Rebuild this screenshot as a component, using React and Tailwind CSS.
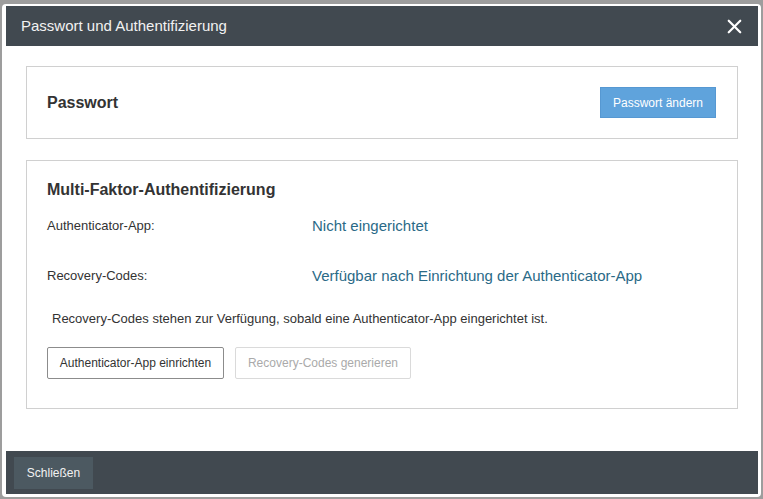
import React from "react";
import { X } from "lucide-react";

const font = { fontFamily: '"Liberation Sans", Arial, sans-serif' };

export default function App() {
  return (
    <div className="w-[763px] h-[499px] bg-[#9d9d9d] overflow-hidden" style={font}>
      <div className="mt-[4px] ml-[2px] w-[759px] h-[493px] bg-white rounded-[4px] pl-[4px] pr-[3px] pt-[2px] pb-[3px] flex flex-col">
        {/* header */}
        <div className="h-[40px] bg-[#414950] flex items-center justify-between pl-[15px] pr-[12px] shrink-0">
          <h1 className="text-[15px] text-[#f2f2f2]">Passwort und Authentifizierung</h1>
          <X size={23} strokeWidth={2.3} className="text-white" />
        </div>

        {/* body */}
        <div className="flex-1 px-[20px] pt-[20px]">
          <div className="border border-[#d0d0d0] h-[73px] px-[20px] flex items-center justify-between">
            <h2 className="text-[16px] font-bold text-[#333]">Passwort</h2>
            <button className="w-[116px] h-[31px] bg-[#5fa3dc] border border-[#5698d2] text-white text-[12px] mr-px">
              Passwort ändern
            </button>
          </div>

          <div className="mt-[21px] border border-[#d0d0d0] h-[249px] px-[20px] pt-[20px]">
            <h2 className="text-[16px] leading-[18px] font-bold text-[#333]">
              Multi-Faktor-Authentifizierung
            </h2>
            <div className="flex items-center h-[50px] mt-[2px]">
              <span className="w-[265px] text-[13px] text-[#333]">Authenticator-App:</span>
              <span className="text-[15px] text-[#2a6a87]">Nicht eingerichtet</span>
            </div>
            <div className="flex items-center h-[50px]">
              <span className="w-[265px] text-[13px] text-[#333]">Recovery-Codes:</span>
              <span className="text-[15px] text-[#2a6a87]">
                Verfügbar nach Einrichtung der Authenticator-App
              </span>
            </div>
            <p className="mt-[10px] pl-[5px] text-[13px] leading-[16px] text-[#333]">
              Recovery-Codes stehen zur Verfügung, sobald eine Authenticator-App eingerichtet ist.
            </p>
            <div className="mt-[20px] flex gap-[11px]">
              <button className="w-[177px] h-[32px] border border-[#8c8c8c] rounded-[2px] text-[12px] text-[#333] bg-white">
                Authenticator-App einrichten
              </button>
              <button className="w-[176px] h-[32px] border border-[#dadada] rounded-[2px] text-[12px] text-[#aaa] bg-white">
                Recovery-Codes generieren
              </button>
            </div>
          </div>
        </div>

        {/* footer */}
        <div className="h-[43px] bg-[#414950] flex items-center px-[8px] shrink-0">
          <button className="w-[79px] h-[32px] bg-[#4c5961] text-[12px] text-[#f2f2f2]">
            Schließen
          </button>
        </div>
      </div>
    </div>
  );
}
